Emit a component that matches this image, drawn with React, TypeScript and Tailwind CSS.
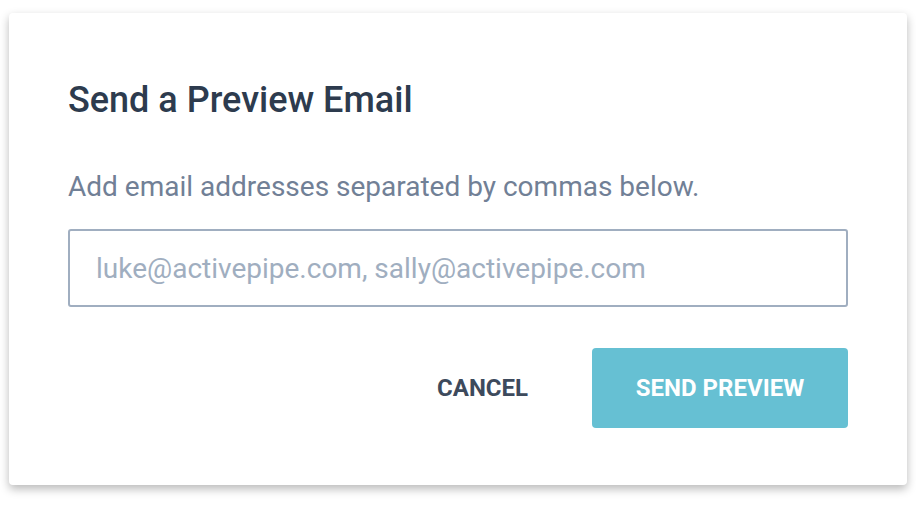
import { useState } from 'react'

export default function App() {
  const [emails, setEmails] = useState('')

  return (
    <div className="min-h-[511px] w-[916px] bg-white pl-[9px] pt-[13px] font-['Roboto',sans-serif]">
      <div className="w-[898px] rounded-[4px] bg-white px-[59px] pb-[57px] pt-[60px] shadow-[0_4px_10px_rgba(0,0,0,0.28)]">
        <h2 className="text-[36px] font-medium leading-[54px] text-[#2d3b4e]">
          Send a Preview Email
        </h2>
        <p className="mt-[39px] text-[28px] leading-[42px] text-[#718096]">
          Add email addresses separated by commas below.
        </p>
        <input
          type="text"
          value={emails}
          onChange={(e) => setEmails(e.target.value)}
          placeholder="luke@activepipe.com, sally@activepipe.com"
          className="mt-[21px] h-[78px] w-full rounded-[3px] border-2 border-[#a0aec0] px-[26px] text-[28px] text-[#2d3b4e] outline-none placeholder:text-[#a0aec0]"
        />
        <div className="mt-[41px] flex items-center justify-end gap-[64px]">
          <button className="text-[24px] font-bold text-[#3d4a5c]">
            CANCEL
          </button>
          <button className="h-[80px] w-[256px] rounded-[4px] bg-[#66c0d3] text-[24px] font-bold text-white">
            SEND PREVIEW
          </button>
        </div>
      </div>
    </div>
  )
}
